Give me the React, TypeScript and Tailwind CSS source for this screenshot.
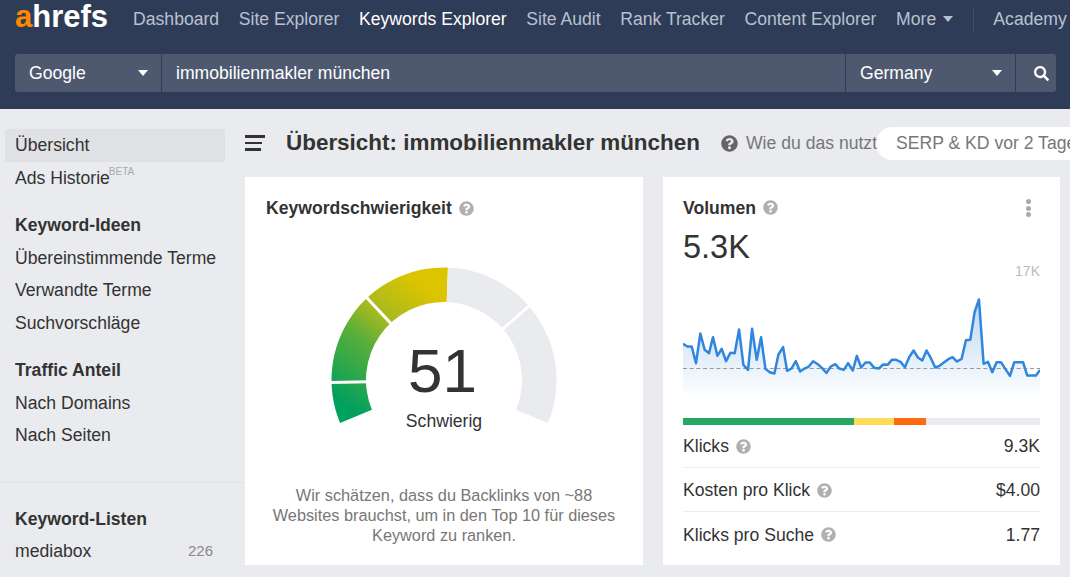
import { FaQuestionCircle, FaSearch } from "react-icons/fa";

const navItems = ["Dashboard", "Site Explorer", "Keywords Explorer", "Site Audit", "Rank Tracker", "Content Explorer"];

const points =
  "40,252 53,260 66,260 79,310 92,221 105,270 118,280 130,232 143,288 156,267 169,304 182,279 195,280 208,209 221,315 235,330 247,207 261,300 274,232 287,327 300,337 314,341 326,284 340,262 352,333 365,326 378,304 391,335 404,326 417,320 430,304 444,313 457,325 470,339 483,320 496,313 509,326 522,330 535,310 549,332 561,288 574,323 587,308 600,308 613,324 627,326 640,314 653,315 666,300 679,300 692,306 705,322 718,292 731,272 744,293 757,302 770,272 783,295 796,323 809,318 822,308 835,298 848,292 861,305 875,297 888,241 901,240 914,157 927,119 941,312 954,306 967,337 980,307 993,307 1006,327 1020,348 1033,307 1046,307 1059,307 1072,347 1085,347 1098,347 1110,330";

function Caret({ className }: { className?: string }) {
  return <span className={`inline-block border-x-[5.5px] border-t-[6px] border-x-transparent ${className}`} />;
}

function SideItem({ label, active }: { label: string; active?: boolean }) {
  return (
    <div className={`mr-[20px] ml-[5px] flex h-[32.67px] items-center rounded-[3px] pb-[1px] pl-[10px] text-[17.6px] ${active ? "bg-[#dfe1e4]" : ""}`}>
      {label}
    </div>
  );
}

function SideHead({ label }: { label: string }) {
  return <div className="mr-[20px] ml-[5px] flex h-[32.67px] items-center pb-[1px] pl-[10px] text-[17.6px] font-bold">{label}</div>;
}

const CX = 125;
const CY = 125;
const R = 112.5;
const r = 78;

function pt(rad: number, deg: number) {
  const a = (deg * Math.PI) / 180;
  return [CX + rad * Math.cos(a), CY + rad * Math.sin(a)];
}

function arc(startDeg: number, endDeg: number) {
  const [x1, y1] = pt(R, startDeg);
  const [x2, y2] = pt(R, endDeg);
  const [x3, y3] = pt(r, endDeg);
  const [x4, y4] = pt(r, startDeg);
  return `M${x1} ${y1} A${R} ${R} 0 0 1 ${x2} ${y2} L${x3} ${y3} A${r} ${r} 0 0 0 ${x4} ${y4} Z`;
}

function Gauge() {
  return (
    <svg width="250" height="180" viewBox="0 0 250 180" className="block">
      <defs>
        <linearGradient id="kd" gradientUnits="userSpaceOnUse" x1="45" y1="165" x2="130" y2="50">
          <stop offset="0" stopColor="#00a05e" />
          <stop offset="0.45" stopColor="#5aae3a" />
          <stop offset="0.66" stopColor="#a5ba1f" />
          <stop offset="1" stopColor="#dcc400" />
        </linearGradient>
      </defs>
      <path d={arc(157.5, 272)} fill="url(#kd)" />
      <path d={arc(272, 382.5)} fill="#e9ebee" />
      <g stroke="#fff" strokeWidth="3">
        {[178.7, 226.8, 319].map((deg) => {
          const [x1, y1] = pt(r - 2, deg);
          const [x2, y2] = pt(R + 2, deg);
          return <line key={deg} x1={x1} y1={y1} x2={x2} y2={y2} />;
        })}
      </g>
    </svg>
  );
}

function Help({ className }: { className?: string }) {
  return <FaQuestionCircle className={`shrink-0 text-[#b0b0b0] ${className}`} size={15} />;
}

function StatRow({ label, value, last }: { label: string; value: string; last?: boolean }) {
  return (
    <div className={`flex h-[44px] items-center justify-between pt-[1px] text-[17.6px] ${last ? "" : "border-b border-[#e9ebee]"}`}>
      <span className="flex items-center gap-[7px]">
        {label}
        <Help />
      </span>
      <span>{value}</span>
    </div>
  );
}

export default function App() {
  return (
    <div className="flex h-[577px] w-full flex-col overflow-hidden bg-[#e9ebee] font-['Liberation_Sans',Arial,sans-serif] text-[#333333]">
      <header className="h-[109px] shrink-0 bg-[#2f3c57] pr-[14px] pl-[15px]">
        <div className="flex h-[54px] items-start whitespace-nowrap">
          <div className="mt-[-1px] mr-[25px] text-[31px] leading-[36px] font-bold text-white">
            <span className="text-[#ff8800]">a</span>hrefs
          </div>
          <nav className="flex h-[39px] shrink-0 items-center gap-[19.6px] text-[17.6px] text-[#b9c1d0]">
            {navItems.map((item) => (
              <span key={item} className={item === "Keywords Explorer" ? "text-white" : ""}>
                {item}
              </span>
            ))}
            <span className="flex items-center gap-[7px]">
              More <Caret className="border-t-[#b9c1d0]" />
            </span>
            <span className="h-[24px] w-px bg-[#3f4c68]" />
            <span>Academy</span>
          </nav>
        </div>
        <div className="flex h-[38px] overflow-hidden rounded-[3px] bg-[#4e5970] text-[17.6px] text-white">
          <div className="flex w-[147px] items-center justify-between border-r border-[#2f3c57] pr-[13px] pl-[14px]">
            Google <Caret className="border-t-white" />
          </div>
          <div className="flex flex-1 items-center pl-[14px]">immobilienmakler münchen</div>
          <div className="flex w-[171px] items-center justify-between border-x border-[#2f3c57] pr-[13px] pl-[14px]">
            Germany <Caret className="border-t-white" />
          </div>
          <div className="flex w-[40px] items-center justify-center pl-[10px]">
            <FaSearch size={15} />
          </div>
        </div>
      </header>

      <div className="flex min-h-0 flex-1">
        <aside className="flex w-[245px] shrink-0 flex-col pt-[20px]">
          <SideItem label="Übersicht" active />
          <div className="mr-[20px] ml-[5px] flex h-[32.67px] items-center pl-[10px] text-[17.6px]">
            Ads Historie<sup className="mb-[2px] -ml-[1px] text-[10px] text-[#aaaaaa]">BETA</sup>
          </div>
          <div className="mt-[15px]">
            <SideHead label="Keyword-Ideen" />
            <SideItem label="Übereinstimmende Terme" />
            <SideItem label="Verwandte Terme" />
            <SideItem label="Suchvorschläge" />
          </div>
          <div className="mt-[14.5px]">
            <SideHead label="Traffic Anteil" />
            <SideItem label="Nach Domains" />
            <SideItem label="Nach Seiten" />
          </div>
          <div className="mt-[29.5px] border-t border-[#dfe1e4] pt-[20px]">
            <SideHead label="Keyword-Listen" />
            <div className="mr-[32px] ml-[5px] flex h-[32.67px] items-center justify-between pb-[1px] pl-[10px] text-[17.6px]">
              mediabox <span className="text-[15px] text-[#888888]">226</span>
            </div>
          </div>
        </aside>

        <main className="min-w-0 flex-1 overflow-hidden">
          <div className="flex h-[68px] items-center whitespace-nowrap">
            <div className="flex w-[41px] shrink-0 flex-col gap-[4px]">
              <span className="h-[2.5px] w-[20px] bg-[#333333]" />
              <span className="h-[2.5px] w-[17px] bg-[#333333]" />
              <span className="h-[2.5px] w-[16px] bg-[#333333]" />
            </div>
            <h1 className="mb-[1px] w-[414px] shrink-0 text-[22.45px] font-bold">Übersicht: immobilienmakler münchen</h1>
            <FaQuestionCircle className="mr-[8px] ml-[21px] shrink-0 text-[#666666]" size={17} />
            <span className="w-[130px] shrink-0 text-[17.6px] text-[#777777]">Wie du das nutzt</span>
            <div className="flex h-[33px] shrink-0 items-center rounded-l-full bg-white pl-[20px] text-[17.6px] text-[#777777]">
              SERP &amp; KD vor 2 Tagen
            </div>
          </div>

          <div className="flex h-[388px] w-[815px] gap-[20px]">
            <section className="flex w-[398px] shrink-0 flex-col items-center bg-white">
              <div className="flex h-[62px] w-full items-center gap-[7px] pl-[21px] text-[17.6px] font-bold">
                Keywordschwierigkeit <Help />
              </div>
              <div className="relative mt-[15.5px]">
                <Gauge />
                <div className="absolute inset-x-0 top-[76px] text-center">
                  <div className="pr-[3px] text-[62px] leading-[80px]">51</div>
                  <div className="text-[17.6px] leading-[20px]">Schwierig</div>
                </div>
              </div>
              <p className="mt-[50px] w-[360px] text-center text-[16.3px] leading-[20px] text-[#777777]">
                Wir schätzen, dass du Backlinks von ~88 Websites brauchst, um in den Top 10 für dieses Keyword zu ranken.
              </p>
            </section>

            <section className="flex w-[397px] shrink-0 flex-col bg-white px-[20px]">
              <div className="flex h-[62px] shrink-0 items-center justify-between text-[17.6px] font-bold">
                <span className="flex items-center gap-[7px]">
                  Volumen <Help />
                </span>
                <span className="mr-[9px] flex flex-col gap-[1.5px]">
                  <span className="h-[5px] w-[5px] rounded-full bg-[#aaaaaa]" />
                  <span className="h-[5px] w-[5px] rounded-full bg-[#aaaaaa]" />
                  <span className="h-[5px] w-[5px] rounded-full bg-[#aaaaaa]" />
                </span>
              </div>
              <div className="mt-[-2px] text-[32.5px] leading-[20px]">5.3K</div>
              <div className="mt-[6px] text-right text-[14px] leading-[16px] text-[#bbbbbb]">17K</div>
              <svg width="357" height="107" viewBox="40 100 1070 320" className="mt-[14.3px] block shrink-0">
                <defs>
                  <linearGradient id="vol" x1="0" y1="0" x2="0" y2="1">
                    <stop offset="0" stopColor="#bcd6f2" />
                    <stop offset="1" stopColor="#ffffff" />
                  </linearGradient>
                </defs>
                <polygon points={`40,415 ${points} 1110,415`} fill="url(#vol)" />
                <line x1="40" y1="326" x2="1110" y2="326" stroke="#999999" strokeWidth="3" strokeDasharray="12 8" />
                <polyline points={points} fill="none" stroke="#2f86dc" strokeWidth="7.5" strokeLinejoin="round" />
              </svg>
              <div className="mt-[18px] flex h-[7px] shrink-0 bg-[#e9ebee]">
                <span className="w-[171px] bg-[#27a862]" />
                <span className="w-[40px] bg-[#ffdb5c]" />
                <span className="w-[32px] bg-[#ff6a10]" />
              </div>
              <div className="mt-[-1px]">
                <StatRow label="Klicks" value="9.3K" />
                <StatRow label="Kosten pro Klick" value="$4.00" />
                <StatRow label="Klicks pro Suche" value="1.77" last />
              </div>
            </section>
          </div>
        </main>
      </div>
    </div>
  );
}
